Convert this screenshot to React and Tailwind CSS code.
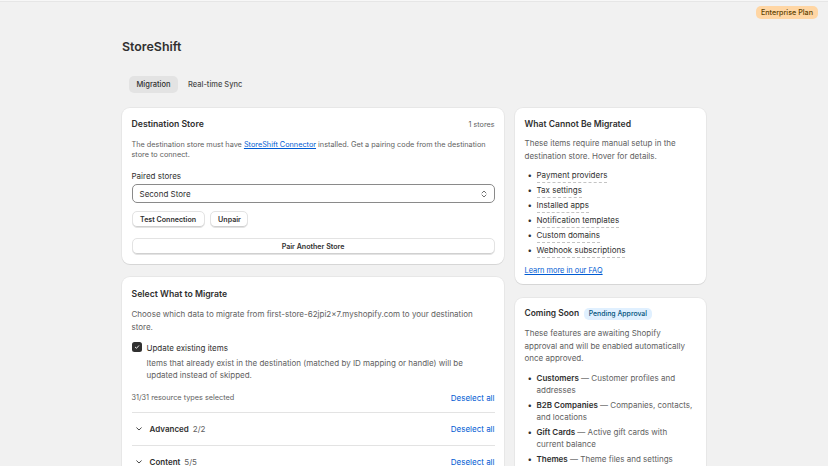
import React from "react";

const FONT = { fontFamily: "Inter, 'Noto Sans', sans-serif" };

function Card({ children, className = "" }) {
  return (
    <div
      className={`bg-white rounded-[8px] px-[9.5px] shadow-[0_1px_0_0_rgba(26,26,26,0.08),0_0_0_1px_rgba(0,0,0,0.04)] ${className}`}
    >
      {children}
    </div>
  );
}

function Btn({ children, className = "" }) {
  return (
    <button className={`h-[17px] px-[7.5px] rounded-[5px] bg-white border border-[#e3e3e3] shadow-[inset_0_-1px_0_#d0d0d0] text-[7.1px] font-semibold text-[#303030] leading-none ${className}`}>
      {children}
    </button>
  );
}

function Chevron() {
  return (
    <svg width="6" height="4" viewBox="0 0 6 4" className="mr-[8px]">
      <path d="M0.7 0.8 L3 3 L5.3 0.8" fill="none" stroke="#4a4a4a" strokeWidth="1" strokeLinecap="round" strokeLinejoin="round" />
    </svg>
  );
}

function GroupRow({ name, count }) {
  return (
    <div className="flex items-center justify-between h-[33px] border-t border-[#e3e3e3]">
      <div className="flex items-center pl-[4px]">
        <Chevron />
        <span className="text-[8px] font-semibold text-[#303030]">{name}</span>
        <span className="text-[8px] text-[#616161] ml-[4px]">{count}</span>
      </div>
      <span className="text-[8px] text-[#005bd3]">Deselect all</span>
    </div>
  );
}

const cannot = [
  "Payment providers",
  "Tax settings",
  "Installed apps",
  "Notification templates",
  "Custom domains",
  "Webhook subscriptions",
];

const soon = [
  ["Customers", "Customer profiles and addresses"],
  ["B2B Companies", "Companies, contacts, and locations"],
  ["Gift Cards", "Active gift cards with current balance"],
  ["Themes", "Theme files and settings"],
];

export default function App() {
  return (
    <div className="min-h-screen bg-[#f1f1f1] text-[#303030]" style={FONT}>
      <div className="h-[2px] bg-[#f7f7f7] border-b border-[#e6e6e6]" />

      <div className="flex justify-end pr-[10px] pt-[4px]">
        <span className="h-[13px] px-[5px] rounded-[5px] bg-[#ffd6a4] text-[#5e4200] text-[7.2px] leading-[13px] font-medium">
          Enterprise Plan
        </span>
      </div>

      <div className="max-w-[584px] mx-auto">
        <h1 className="mt-[19px] text-[12.4px] leading-[17px] font-semibold text-[#303030]">
          StoreShift
        </h1>

        <div className="flex items-center gap-[2px] mt-[21px] pl-[7px]">
          <span className="h-[17px] px-[7.5px] rounded-[5px] bg-[#e3e3e3] text-[7.5px] leading-[17px] font-medium text-[#303030]">
            Migration
          </span>
          <span className="h-[17px] px-[8px] text-[7.5px] leading-[17px] font-medium text-[#4a4a4a]">
            Real-time Sync
          </span>
        </div>

        <div className="grid grid-cols-[2fr_1fr] gap-[11px] mt-[15px] items-start">
          {/* left column */}
          <div className="flex flex-col gap-[13px]">
            <Card className="pt-[11.5px] pb-[9.5px]">
              <div className="flex items-center justify-between h-[11px]">
                <h2 className="text-[8.7px] font-semibold">Destination Store</h2>
                <span className="text-[7.2px] text-[#616161]">1 stores</span>
              </div>
              <p className="mt-[9px] text-[7.3px] leading-[10.4px] text-[#616161]">
                The destination store must have{" "}
                <span className="text-[#005bd3] underline">StoreShift Connector</span>{" "}
                installed. Get a pairing code from the destination store to connect.
              </p>
              <p className="mt-[10px] text-[8px] leading-[13px]">Paired stores</p>
              <div className="mt-[0.5px] h-[19.5px] rounded-[5px] border border-[#8a8a8a] flex items-center justify-between px-[7px]">
                <span className="text-[8px]">Second Store</span>
                <svg width="6" height="8" viewBox="0 0 6 8">
                  <path d="M1 3 L3 1 L5 3 M1 5 L3 7 L5 5" fill="none" stroke="#616161" strokeWidth="0.9" strokeLinecap="round" strokeLinejoin="round" />
                </svg>
              </div>
              <div className="flex gap-[5px] mt-[7.5px]">
                <Btn>Test Connection</Btn>
                <Btn className="w-[38px] px-0">Unpair</Btn>
              </div>
              <Btn className="w-full mt-[10px]">Pair Another Store</Btn>
            </Card>

            <Card className="pt-[11.5px]">
              <h2 className="text-[8.7px] leading-[11px] font-semibold">Select What to Migrate</h2>
              <p className="mt-[8px] text-[8px] leading-[13px] text-[#616161]">
                Choose which data to migrate from first-store-62jpi2x7.myshopify.com to your destination store.
              </p>
              <div className="flex mt-[8.5px]">
                <span className="w-[10px] h-[10px] rounded-[2.5px] bg-[#303030] flex items-center justify-center mr-[5px] shrink-0">
                  <svg width="6" height="6" viewBox="0 0 6 6">
                    <path d="M1.3 3.2 L2.5 4.3 L4.7 1.8" fill="none" stroke="white" strokeWidth="0.9" strokeLinecap="round" strokeLinejoin="round" />
                  </svg>
                </span>
                <div>
                  <p className="text-[8px] leading-[13px]">Update existing items</p>
                  <p className="mt-[1.5px] text-[8px] leading-[12.5px] text-[#616161]">
                    Items that already exist in the destination (matched by ID mapping or handle) will be updated instead of skipped.
                  </p>
                </div>
              </div>
              <div className="flex items-center justify-between mt-[10px] h-[13px]">
                <span className="text-[7.3px] text-[#616161]">31/31 resource types selected</span>
                <span className="text-[8px] text-[#005bd3]">Deselect all</span>
              </div>
              <div className="mt-[7px]">
                <GroupRow name="Advanced" count="2/2" />
                <GroupRow name="Content" count="5/5" />
                <GroupRow name="Products" count="6/6" />
              </div>
            </Card>
          </div>

          {/* right column */}
          <div className="flex flex-col gap-[14px]">
            <Card className="pt-[11px] pb-[8px]">
              <h2 className="text-[8.6px] leading-[11px] font-semibold">What Cannot Be Migrated</h2>
              <p className="mt-[7px] text-[8px] leading-[12.7px] text-[#616161]">
                These items require manual setup in the destination store. Hover for details.
              </p>
              <ul className="mt-[6.5px] flex flex-col gap-[1.3px]">
                {cannot.map((c) => (
                  <li key={c} className="flex items-start text-[8px] leading-[12.7px]">
                    <span className="w-[12px] pl-[3px]">•</span>
                    <span className="border-b border-dashed border-[#c4c4c4]">{c}</span>
                  </li>
                ))}
              </ul>
              <p className="mt-[8px] text-[7.4px] leading-[10.4px] text-[#005bd3] underline">
                Learn more in our FAQ
              </p>
            </Card>

            <Card className="pt-[9.5px] pb-[9.5px]">
              <div className="flex items-center gap-[5px] h-[12px]">
                <h2 className="text-[8.45px] font-semibold">Coming Soon</h2>
                <span className="h-[12px] px-[4.5px] rounded-[5px] bg-[#e0f0ff] text-[#00527c] text-[6.9px] leading-[12px] font-medium">
                  Pending Approval
                </span>
              </div>
              <p className="mt-[7.7px] pr-[2px] text-[8px] leading-[12.5px] text-[#616161]">
                These features are awaiting Shopify approval and will be enabled automatically once approved.
              </p>
              <ul className="mt-[7px] flex flex-col gap-[1.6px]">
                {soon.map(([t, d]) => (
                  <li key={t} className="flex items-start text-[8px] leading-[12.7px]">
                    <span className="w-[12px] pl-[3px] shrink-0">•</span>
                    <span className="text-[#616161]">
                      <b className="font-semibold text-[#303030]">{t}</b> — {d}
                    </span>
                  </li>
                ))}
              </ul>
            </Card>
          </div>
        </div>
      </div>
    </div>
  );
}
